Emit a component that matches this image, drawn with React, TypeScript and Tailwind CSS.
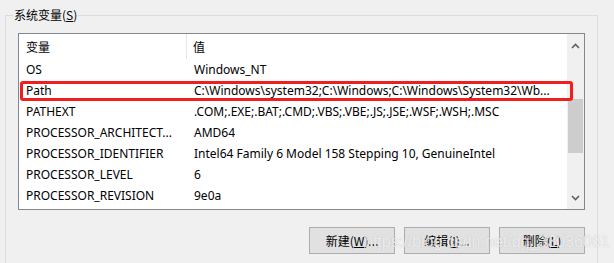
const rows = [
  { name: "OS", value: "Windows_NT" },
  { name: "Path", value: "C:\\Windows\\system32;C:\\Windows;C:\\Windows\\System32\\Wb..." },
  { name: "PATHEXT", value: ".COM;.EXE;.BAT;.CMD;.VBS;.VBE;.JS;.JSE;.WSF;.WSH;.MSC" },
  { name: "PROCESSOR_ARCHITECT...", value: "AMD64" },
  { name: "PROCESSOR_IDENTIFIER", value: "Intel64 Family 6 Model 158 Stepping 10, GenuineIntel" },
  { name: "PROCESSOR_LEVEL", value: "6" },
  { name: "PROCESSOR_REVISION", value: "9e0a" },
];

const font = { fontFamily: '"Segoe UI", "Noto Sans", "Noto Sans CJK SC", sans-serif' };

const Button = ({ label, hot, tail }: { label: string; hot: string; tail: string }) => (
  <button className="w-[86px] h-[27px] bg-[#e1e1e1] border border-[#adadad] text-[12px] text-black flex items-center justify-center font-['Noto_Sans_CJK_SC',sans-serif]">
    {label}(<span className="underline">{hot}</span>){tail}
  </button>
);

export default function App() {
  return (
    <div className="relative w-[614px] h-[263px] bg-[#f0f0f0] overflow-hidden pt-[15px] pl-[5px]" style={font}>
      {/* group box */}
      <div className="relative w-[593px] h-[260px] border-l border-t border-r border-[#dcdcdc]">
        <div className="absolute -top-[10px] left-[7px] px-[1px] bg-[#f0f0f0] text-[12px] leading-[18px] text-black font-['Noto_Sans_CJK_SC',sans-serif]">
          系统变量(<span className="underline">S</span>)
        </div>

        <div className="relative ml-[12px] mt-[17px] w-[567px] h-[177px] border border-[#828790] bg-white flex">
          <div className="w-[548px] flex flex-col">
            <div className="h-[25px] flex text-[12px] text-black font-['Noto_Sans_CJK_SC',sans-serif]">
              <div className="w-[168px] pl-[7px] flex items-center border-r border-[#e5e5e5]">变量</div>
              <div className="pl-[6px] flex items-center">值</div>
            </div>
            {rows.map((r) => (
              <div key={r.name} className="h-[21px] pt-[1px] flex items-center text-[12px] text-black whitespace-nowrap">
                <div className="w-[168px] pl-[7px]">{r.name}</div>
                <div className="pl-[7px]">{r.value}</div>
              </div>
            ))}
          </div>

          {/* scrollbar */}
          <div className="w-[17px] bg-[#f0f0f0] flex flex-col">
            <div className="h-[20px] flex items-center justify-center mt-[2px]">
              <svg width="9" height="6" viewBox="0 0 9 6">
                <path d="M1 5 L4.5 1.5 L8 5" fill="none" stroke="#606060" strokeWidth="1.6" />
              </svg>
            </div>
            <div className="mt-[43px] mx-[1px] h-[54px] bg-[#cdcdcd]" />
            <div className="flex-1" />
            <div className="h-[20px] flex items-center justify-center mb-[1px]">
              <svg width="9" height="6" viewBox="0 0 9 6">
                <path d="M1 1 L4.5 4.5 L8 1" fill="none" stroke="#606060" strokeWidth="1.6" />
              </svg>
            </div>
          </div>

          {/* highlight */}
          <div className="absolute left-[1px] top-[47px] w-[553px] h-[20px] border-[3px] border-[#f01e1e] rounded-[3px]" />
        </div>

        <div className="mt-[17px] w-[579px] flex justify-end gap-[9px]">
          <Button label="新建" hot="W" tail="..." />
          <Button label="编辑" hot="I" tail="..." />
          <Button label="删除" hot="L" tail="" />
        </div>
      </div>

      {/* watermark */}
      <div
        className="absolute left-[364px] top-[231px] text-[16px] leading-[22px] text-white/75 font-['Liberation_Sans',sans-serif] whitespace-nowrap"
        style={{ textShadow: "0 0 1px rgba(120,120,120,0.45)" }}
      >
        https://blog.csdn.net/qq_33036061
      </div>
    </div>
  );
}
